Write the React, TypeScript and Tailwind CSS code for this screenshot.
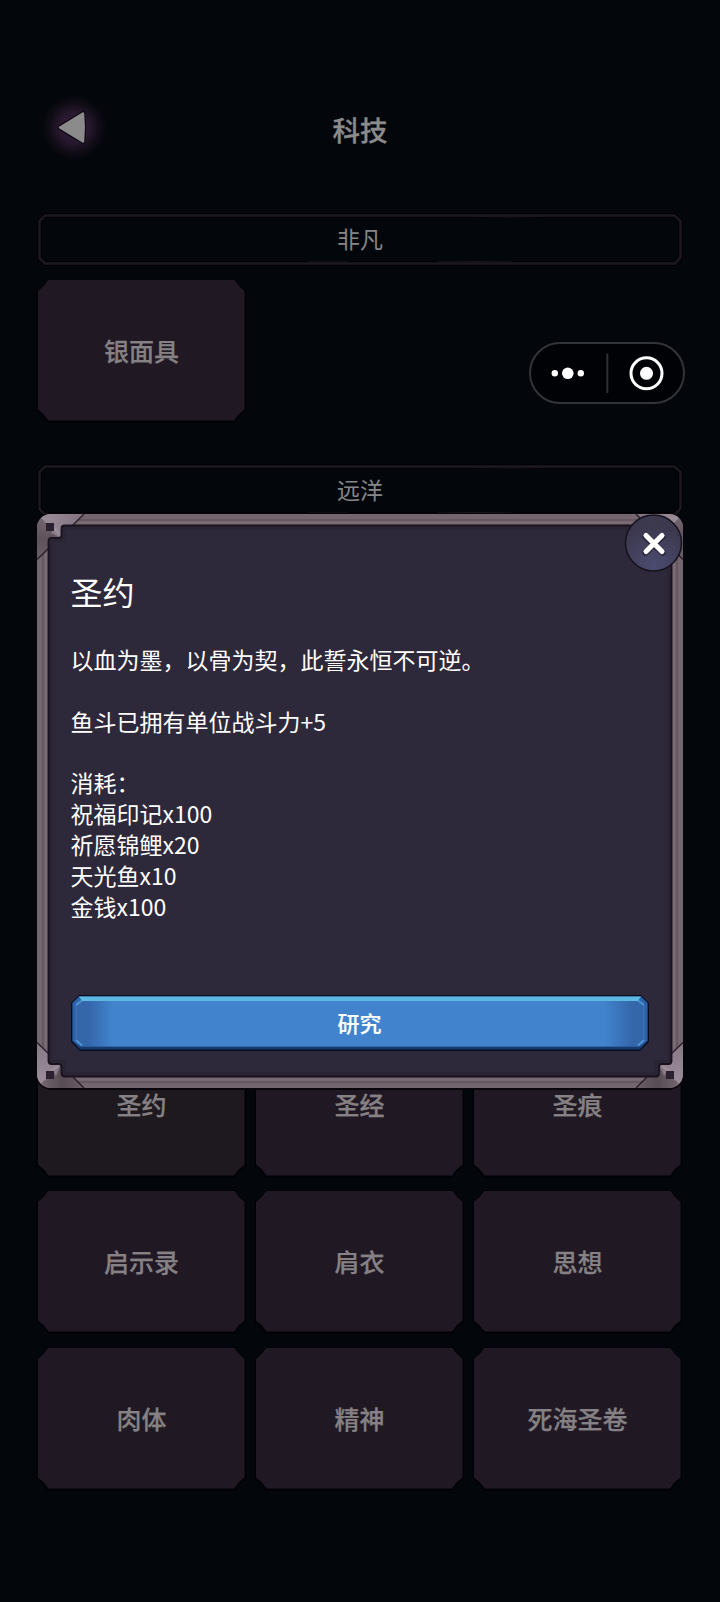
import React from 'react';

const rows = [
  ['圣约', '圣经', '圣痕'],
  ['启示录', '肩衣', '思想'],
  ['肉体', '精神', '死海圣卷'],
];

const costs = ['祝福印记x100', '祈愿锦鲤x20', '天光鱼x10', '金钱x100'];

function SectionTitle({ children }: { children: React.ReactNode }) {
  return (
    <div className="relative h-[51px] flex items-center justify-center text-[23px] leading-none text-[#858687]">
      <svg className="absolute inset-0 overflow-visible" width="644" height="51" viewBox="0 0 644 51" fill="none">
        <path d="M7 1.5H636.5L642.5 7V43.5L637 49.5H7L1.5 44V7Z" stroke="#020004" strokeWidth="5" />
        <path d="M7 1.5H636.5L642.5 7V43.5L637 49.5H7L1.5 44V7Z" stroke="#1d181f" strokeWidth="2.6" />
        <path d="M440 2.5Q470 3.5 505 2.5M400 48Q440 47 475 48M270 48H310" stroke="#1c171e" />
      </svg>
      <span className="relative -top-px">{children}</span>
    </div>
  );
}

function TechCard({ name, active }: { name: string; active?: boolean }) {
  return (
    <div className="relative h-[140.5px] flex items-center justify-center text-[25px] font-medium leading-none text-[#858184] [-webkit-text-stroke:0.25px_#858184]">
      <svg className="absolute inset-0 overflow-visible" width="207" height="140.5" viewBox="0 0 207 140.5">
        <path
          d="M10 0H196.5Q200 7 206.5 11V129.5Q200 133 196 140.5H10.5Q6 133 0 129.5V11Q6 7 10 0Z"
          fill="#010206"
          stroke="#010206"
          strokeWidth="3"
          transform="translate(0 1)"
        />
        <path
          d="M10 0H196.5L200.5 5.5L206.5 11V129.5L200.5 134.5L196 140.5H10.5L6 134.500L0 129.5V11L6 5.5Z"
          fill={active ? '#1e191e' : '#201822'}
        />
      </svg>
      <span className="relative">{name}</span>
    </div>
  );
}

function BackButton() {
  return (
    <svg width="70" height="70" viewBox="0 0 70 70">
      <defs>
        <radialGradient id="glow">
          <stop offset="0" stopColor="#36203c" />
          <stop offset="0.45" stopColor="#28182e" />
          <stop offset="0.75" stopColor="#100c16" />
          <stop offset="1" stopColor="#03060b" />
        </radialGradient>
      </defs>
      <circle cx="37" cy="35.5" r="33" fill="url(#glow)" />
      <path d="M23 35.5L46 21.5Q47.5 35 46 49.5Z" fill="#8b8b8b" stroke="#08050a" strokeWidth="4.5" strokeLinejoin="round" />
      <path d="M23 35.5L46 21.5Q47.5 35 46 49.5Z" fill="#8b8b8b" stroke="#8b8b8b" strokeWidth="2.5" strokeLinejoin="round" />
    </svg>
  );
}

function Capsule() {
  return (
    <div className="absolute left-[529px] top-[342px] w-[156px] h-[62px] rounded-full border-2 border-[#333437] bg-[#010205]">
      <svg className="block" width="152" height="58" viewBox="0 0 152 58">
        <circle cx="23.8" cy="29.3" r="3.2" fill="#fff" />
        <circle cx="36.8" cy="29.3" r="5.8" fill="#fff" />
        <circle cx="49.8" cy="29.3" r="3.2" fill="#fff" />
        <path d="M76.3 9.5V49" stroke="#2f3033" strokeWidth="2" />
        <circle cx="115.5" cy="29.3" r="15.5" fill="none" stroke="#fff" strokeWidth="3" />
        <circle cx="115.5" cy="29.3" r="6.5" fill="#fff" />
      </svg>
    </div>
  );
}

function Corner({ transform, side, face }: { transform?: string; side: string; face: string }) {
  return (
    <g transform={transform}>
      <path d="M0 45.5V14Q0 8 4 4L24.5 24H12V34.5Z" fill={side} />
      <path d="M4 4Q8 0 14 0H47L36 11.5H24.5V24Z" fill={face} />
      <path d="M24.5 24.5L14 19L19 12Z" fill="#a294a2" opacity="0.6" />
      <path d="M47 0L36 11M0 45.5L11.5 34.5" stroke="#2c212d" strokeWidth="1.5" />
      <rect x="9" y="9" width="8" height="8" fill="#2b2030" />
    </g>
  );
}

function Frame() {
  return (
    <svg className="absolute inset-0 overflow-visible" width="646" height="574" viewBox="0 0 646 574">
      <defs>
        <linearGradient id="dark" x1="0" y1="0" x2="0" y2="1">
          <stop offset="0" stopColor="#74666f" />
          <stop offset="0.5" stopColor="#5f525a" />
          <stop offset="1" stopColor="#6d5f68" />
        </linearGradient>
        <linearGradient id="light" x1="0" y1="0" x2="1" y2="0">
          <stop offset="0" stopColor="#9b8d99" />
          <stop offset="1" stopColor="#807280" />
        </linearGradient>
        <linearGradient id="lightSide" x1="0" y1="0" x2="0" y2="1">
          <stop offset="0" stopColor="#9b8d99" />
          <stop offset="1" stopColor="#877986" />
        </linearGradient>
        <linearGradient id="darkFace" x1="0" y1="0" x2="1" y2="0">
          <stop offset="0" stopColor="#74676f" />
          <stop offset="0.5" stopColor="#574b54" />
          <stop offset="1" stopColor="#6d5f68" />
        </linearGradient>
      </defs>
      <rect x="-1" y="-1" width="648" height="577" rx="15" fill="#08060b" />
      <rect width="646" height="574" rx="14" fill="#74666f" />
      <rect x="6" y="6" width="634" height="562" fill="none" stroke="#65565f" strokeWidth="2" />
      <rect x="9" y="8.5" width="628" height="557" fill="none" stroke="#7b6c74" strokeWidth="2" />
      <Corner side="url(#dark)" face="url(#light)" />
      <Corner transform="translate(646 0) scale(-1 1)" side="url(#dark)" face="url(#light)" />
      <Corner transform="translate(0 574) scale(1 -1)" side="url(#lightSide)" face="url(#darkFace)" />
      <Corner transform="translate(646 574) scale(-1 -1)" side="url(#lightSide)" face="url(#darkFace)" />
      <path
        d="M27.5 11.5H618.5Q621.5 11.5 621.5 14.5V21Q621.5 24 624.5 24H631.5Q634.5 24 634.5 27V547Q634.5 550 631.5 550H625Q622 550 622 553V559.5Q622 562.5 619 562.5H27.5Q24.5 562.5 24.5 559.5V553Q24.5 550 21.5 550H14.5Q11.5 550 11.5 547V27Q11.5 24 14.5 24H21.5Q24.5 24 24.5 21V14.5Q24.5 11.5 27.5 11.5Z"
        fill="#2a2534"
        stroke="#1a121d"
        strokeWidth="1.8"
      />
      <path d="M29 16H617V28.5H630V545.5H617V558H29V545.5H16V28.5H29Z" fill="#2e293a" />
    </svg>
  );
}

function CloseButton() {
  return (
    <svg className="absolute left-[587px] top-0" width="59" height="58" viewBox="0 0 59 58">
      <defs>
        <radialGradient id="close" cx="0.5" cy="0.9" r="0.7">
          <stop offset="0" stopColor="#4b4b70" />
          <stop offset="1" stopColor="#3c394f" />
        </radialGradient>
      </defs>
      <circle cx="29.5" cy="29" r="28" fill="url(#close)" stroke="#15111d" strokeWidth="1.5" />
      <path d="M21.5 22.5L38.5 38.5M38.5 22.5L21.5 38.5" stroke="#29263b" strokeWidth="6.5" strokeLinecap="round" />
      <path d="M22 21.5L38 37.5M38 21.5L22 37.5" stroke="#fff" strokeWidth="5.2" strokeLinecap="round" />
    </svg>
  );
}

function ResearchButton() {
  return (
    <button className="relative block w-[578px] h-[56px] text-[22px] font-medium leading-none text-white [-webkit-text-stroke:0.2px_#fff]">
      <svg className="absolute inset-0 overflow-visible" width="578" height="56" viewBox="0 0 578 56">
        <defs>
          <linearGradient id="blue" x1="0" y1="0" x2="1" y2="0">
            <stop offset="0" stopColor="#3466aa" />
            <stop offset="0.02" stopColor="#3466aa" />
            <stop offset="0.065" stopColor="#4184cd" />
            <stop offset="0.93" stopColor="#4184cd" />
            <stop offset="0.98" stopColor="#3466aa" />
            <stop offset="1" stopColor="#3466aa" />
          </linearGradient>
        </defs>
        <path d="M8 0H570L578 8V47L569 56H9L0 47V8Z" fill="#0a0e21" />
        <path d="M8 1.5H570L576.5 8V46L569 54.5H9L1.5 46V8Z" fill="#17396c" />
        <path d="M8 1.5H570L576.5 8V46L569 51.5H9L1.5 46V8Z" fill="#2b62a9" />
        <path d="M9 5H569L573 9V45L568 51.5H10L5 45V9Z" fill="url(#blue)" />
        <path d="M8 1.5H570L567 6H11Z" fill="#5db9e1" />
        <path d="M5 10L11 5.5M573 10L567 5.5M5 45L11 50.5M573 45L567 50.5" stroke="#5093d5" strokeWidth="1.8" />
        <path d="M5 10V45M573 10V45" stroke="#3e76bb" />
      </svg>
      <span className="relative -top-px">研究</span>
    </button>
  );
}

export default function App() {
  return (
    <div
      lang="zh-CN"
      className="relative w-[720px] h-[1602px] overflow-hidden bg-[#03060b] font-['Noto_Sans_CJK_SC',sans-serif]"
    >
      <header className="relative h-[213.5px] pt-[92px] pl-[37px]">
        <BackButton />
        <h1 className="absolute inset-x-0 top-[115px] text-center text-[27.5px] leading-[28px] font-medium text-[#8b8b8b] [-webkit-text-stroke:0.3px_#8b8b8b]">
          科技
        </h1>
      </header>

      <main className="px-[38px] w-[720px]">
        <section className="h-[251.5px]">
          <SectionTitle>非凡</SectionTitle>
          <div className="grid grid-cols-[repeat(3,207px)] gap-x-[11px] mt-[15.5px]">
            <TechCard name="银面具" />
          </div>
        </section>
        <section className="h-[569.5px]">
          <SectionTitle>远洋</SectionTitle>
        </section>
        <section className="grid grid-cols-[repeat(3,207px)] gap-x-[11px] gap-y-[16.2px]">
          {rows.flat().map((name, i) => (
            <TechCard key={name} name={name} active={i === 0} />
          ))}
        </section>
      </main>

      <Capsule />

      <div className="absolute left-[37px] top-[514px] w-[646px] h-[574px]">
        <Frame />
        <div className="relative h-full pl-[33.5px] pt-[56px] text-white">
          <h2 className="text-[32px] leading-[42px]">圣约</h2>
          <div className="mt-[32.3px] text-[23px] leading-[30.8px]">
            <p>以血为墨，以骨为契，此誓永恒不可逆。</p>
            <p className="mt-[30.8px]">鱼斗已拥有单位战斗力+5</p>
            <p className="mt-[30.8px]">消耗：</p>
            {costs.map((cost) => (
              <p key={cost}>{cost}</p>
            ))}
          </div>
          <div className="mt-[73.8px]">
            <ResearchButton />
          </div>
        </div>
        <CloseButton />
      </div>
    </div>
  );
}
